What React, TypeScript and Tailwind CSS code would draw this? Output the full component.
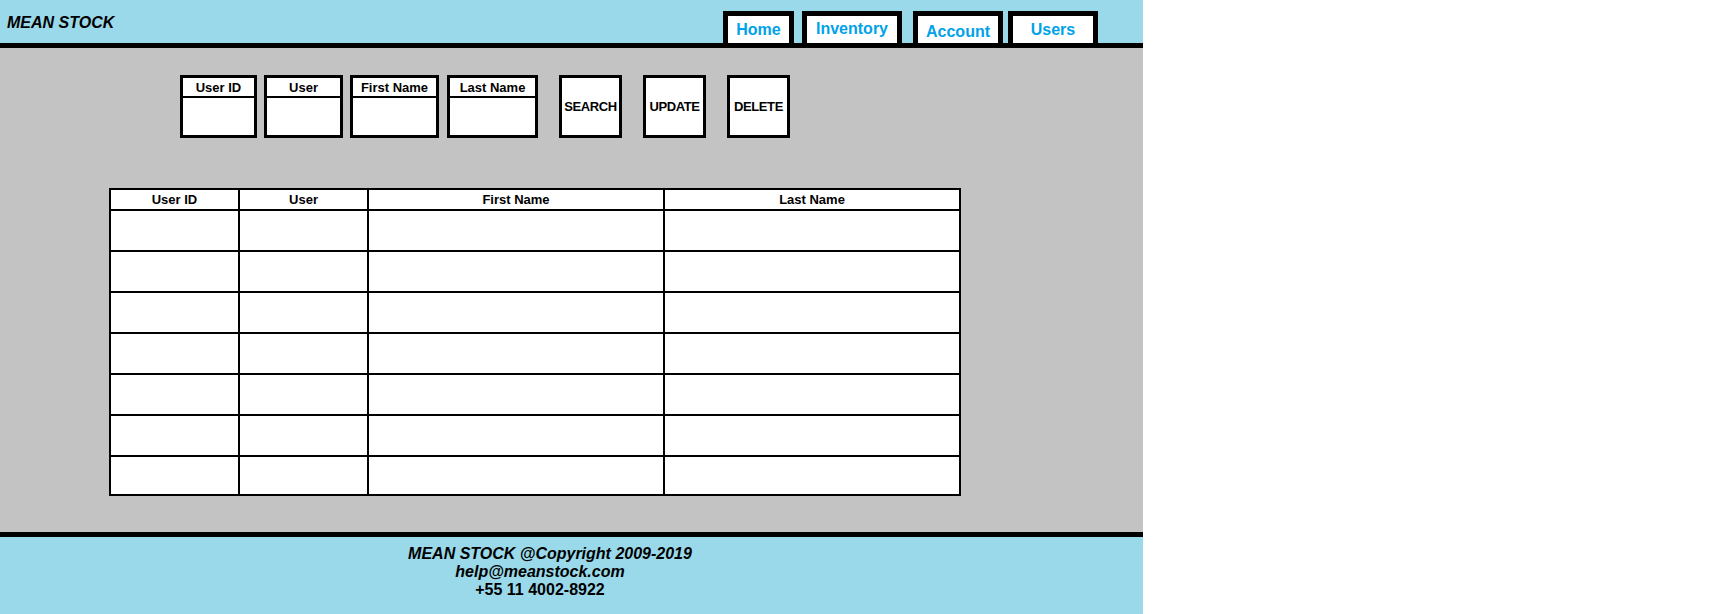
import React from "react";

const tabs = [
  { label: "Home", w: "w-[71px]", ml: "ml-0", pt: "pt-[5px]" },
  { label: "Inventory", w: "w-[100px]", ml: "ml-[8px]", pt: "pt-[4px]" },
  { label: "Account", w: "w-[90px]", ml: "ml-[11px]", pt: "pt-[7px]" },
  { label: "Users", w: "w-[90px]", ml: "ml-[5px]", pt: "pt-[5px]" },
];

const fields = [
  { label: "User ID", w: "w-[77px]", ml: "ml-0" },
  { label: "User", w: "w-[79px]", ml: "ml-[7px]" },
  { label: "First Name", w: "w-[89px]", ml: "ml-[7px]" },
  { label: "Last Name", w: "w-[91px]", ml: "ml-[8px]" },
];

const buttons = [
  { label: "SEARCH", ml: "ml-[21px]" },
  { label: "UPDATE", ml: "ml-[21px]" },
  { label: "DELETE", ml: "ml-[21px]" },
];

const cols = ["User ID", "User", "First Name", "Last Name"];
const rows = [0, 1, 2, 3, 4, 5, 6];

export default function App() {
  return (
    <div
      className="w-[1143px] flex flex-col text-black"
      style={{ fontFamily: '"Liberation Sans", Arial, sans-serif' }}
    >
      {/* Header */}
      <header className="h-[48px] bg-[#99d9ea] border-b-[5px] border-black flex items-end justify-between">
        <div className="self-start pl-[7px] pt-[14px] text-[16px] leading-[18px] font-bold italic">
          MEAN STOCK
        </div>
        <nav className="flex items-end mr-[45px]">
          {tabs.map((t) => (
            <div
              key={t.label}
              className={`${t.w} ${t.ml} h-[32px] bg-white border-black border-t-[5px] border-x-[5px] flex justify-center ${t.pt}`}
            >
              <span className="text-[16px] leading-[18px] font-bold text-[#00a2e8]">
                {t.label}
              </span>
            </div>
          ))}
        </nav>
      </header>

      {/* Content */}
      <main className="h-[484px] bg-[#c3c3c3] flex flex-col">
        <div className="flex pl-[180px] pt-[27px]">
          {fields.map((f) => (
            <div
              key={f.label}
              className={`${f.w} ${f.ml} h-[63px] bg-white border-[3px] border-black flex flex-col`}
            >
              <div className="h-[20px] border-b-2 border-black flex items-center justify-center text-[13px] leading-[15px] font-bold">
                {f.label}
              </div>
              <div className="flex-1" />
            </div>
          ))}
          {buttons.map((b) => (
            <div
              key={b.label}
              className={`w-[63px] h-[63px] ${b.ml} bg-white border-[3px] border-black flex items-center justify-center text-[13px] leading-[15px] font-bold tracking-[-0.4px]`}
            >
              {b.label}
            </div>
          ))}
        </div>

        <div className="ml-[109px] mt-[50px] w-[852px] border-2 border-black bg-white">
          <div className="grid grid-cols-[127px_129px_296px_296px] h-[21px] border-b-2 border-black">
            {cols.map((c, i) => (
              <div
                key={c}
                className={`flex items-center justify-center text-[13px] leading-[15px] font-bold ${i > 0 ? "border-l-2 border-black" : ""}`}
              >
                {c}
              </div>
            ))}
          </div>
          {rows.map((r) => (
            <div
              key={r}
              className={
                r < rows.length - 1
                  ? "grid grid-cols-[127px_129px_296px_296px] h-[41px] border-b-2 border-black"
                  : "grid grid-cols-[127px_129px_296px_296px] h-[37px]"
              }
            >
              {cols.map((c, i) => (
                <div key={c} className={i > 0 ? "border-l-2 border-black" : ""} />
              ))}
            </div>
          ))}
        </div>
      </main>

      {/* Footer */}
      <footer className="h-[82px] bg-[#99d9ea] border-t-[5px] border-black">
        <div className="ml-[340px] w-[400px] pt-[7px] flex flex-col items-center font-bold">
          <div className="pl-[20px] text-[16px] leading-[19px] italic">
            MEAN STOCK @Copyright 2009-2019
          </div>
          <div className="text-[16px] leading-[18px] italic">help@meanstock.com</div>
          <div className="text-[16px] leading-[18px]">+55 11 4002-8922</div>
        </div>
      </footer>
    </div>
  );
}
